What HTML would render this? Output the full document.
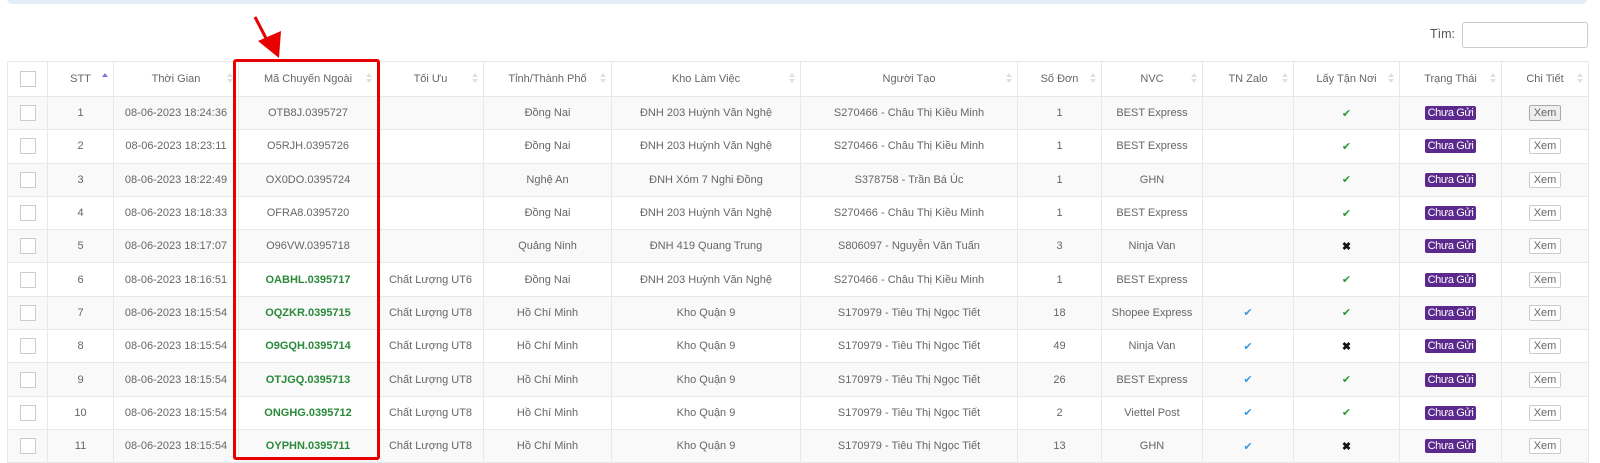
<!DOCTYPE html>
<html><head><meta charset="utf-8"><style>
body{margin:0;width:1600px;height:463px;background:#fff;font-family:"Liberation Sans",sans-serif;font-size:11px;color:#666;position:relative;overflow:hidden}
.bar{position:absolute;left:7px;top:-6px;width:1580px;height:10px;background:#e3ecf8;border-radius:5px}
.tim{position:absolute;left:1430px;top:27px;font-size:12.5px;color:#555}
.inp{position:absolute;left:1462px;top:22px;width:124px;height:24px;border:1px solid #ccc;border-radius:3px}
table{position:absolute;left:7px;top:61px;border-collapse:collapse;table-layout:fixed;width:1581px}
td,th{border:1px solid #e8e8e8;text-align:center;padding:0;height:32.3px;white-space:nowrap;overflow:hidden;position:relative}
th{font-weight:normal;height:34px;color:#666}
tbody tr:nth-child(odd){background:#f9f9f9}
.s{position:absolute;right:8px;top:11px;width:0;height:0}
.s:before{content:"";position:absolute;left:-3px;top:0;border:3px solid transparent;border-bottom:4px solid #e0e0e0;border-top:0}
.s:after{content:"";position:absolute;left:-3px;top:6px;border:3px solid transparent;border-top:4px solid #e0e0e0;border-bottom:0}
.up:before{border-bottom-color:#7a7ad8}.up:after{display:none}
.cb{display:inline-block;width:14px;height:14px;border:1px solid #ccc;background:#fff;vertical-align:middle}
.g{color:#2a8a3a;font-weight:bold}
.b{background:#5b2a8c;color:#fff;font-size:11px;padding:1px 3px;border-radius:2px;letter-spacing:-.4px}
.x{display:inline-block;border:1px solid #ccc;background:#fff;padding:1px 4px;font-size:11px;border-radius:2px}
.x0{background:#eee;border-color:#aaa}
.ck{color:#2a9a3a;font-size:11px}.bl{color:#3a9ae0;font-size:11px}.cr{color:#111;font-size:11px;font-weight:bold}
.red{position:absolute;left:233px;top:59px;width:141px;height:395px;border:3px solid #e60000;border-radius:3px}
</style></head><body>
<div class="bar"></div>
<div class="tim">Tìm:</div><div class="inp"></div>
<table>
<colgroup><col style="width:40px"><col style="width:66px"><col style="width:125px"><col style="width:139px"><col style="width:106px"><col style="width:128px"><col style="width:189px"><col style="width:217px"><col style="width:84px"><col style="width:101px"><col style="width:91px"><col style="width:106px"><col style="width:102px"><col style="width:87px"></colgroup>
<thead><tr><th><span class="cb"></span></th><th>STT<span class="s up"></span></th><th>Thời Gian<span class="s"></span></th><th>Mã Chuyến Ngoài<span class="s"></span></th><th>Tối Ưu<span class="s"></span></th><th>Tỉnh/Thành Phố<span class="s"></span></th><th>Kho Làm Việc<span class="s"></span></th><th>Người Tạo<span class="s"></span></th><th>Số Đơn<span class="s"></span></th><th>NVC<span class="s"></span></th><th>TN Zalo<span class="s"></span></th><th>Lấy Tận Nơi<span class="s"></span></th><th>Trạng Thái<span class="s"></span></th><th>Chi Tiết<span class="s"></span></th></tr></thead>
<tbody>
<tr><td><span class="cb"></span></td><td>1</td><td>08-06-2023 18:24:36</td><td>OTB8J.0395727</td><td></td><td>Đồng Nai</td><td>ĐNH 203 Huỳnh Văn Nghệ</td><td>S270466 - Châu Thị Kiều Minh</td><td>1</td><td>BEST Express</td><td></td><td><span class="ck">✔</span></td><td><span class="b">Chưa Gửi</span></td><td><span class="x x0">Xem</span></td></tr>
<tr><td><span class="cb"></span></td><td>2</td><td>08-06-2023 18:23:11</td><td>O5RJH.0395726</td><td></td><td>Đồng Nai</td><td>ĐNH 203 Huỳnh Văn Nghệ</td><td>S270466 - Châu Thị Kiều Minh</td><td>1</td><td>BEST Express</td><td></td><td><span class="ck">✔</span></td><td><span class="b">Chưa Gửi</span></td><td><span class="x">Xem</span></td></tr>
<tr><td><span class="cb"></span></td><td>3</td><td>08-06-2023 18:22:49</td><td>OX0DO.0395724</td><td></td><td>Nghệ An</td><td>ĐNH Xóm 7 Nghi Đồng</td><td>S378758 - Trần Bá Úc</td><td>1</td><td>GHN</td><td></td><td><span class="ck">✔</span></td><td><span class="b">Chưa Gửi</span></td><td><span class="x">Xem</span></td></tr>
<tr><td><span class="cb"></span></td><td>4</td><td>08-06-2023 18:18:33</td><td>OFRA8.0395720</td><td></td><td>Đồng Nai</td><td>ĐNH 203 Huỳnh Văn Nghệ</td><td>S270466 - Châu Thị Kiều Minh</td><td>1</td><td>BEST Express</td><td></td><td><span class="ck">✔</span></td><td><span class="b">Chưa Gửi</span></td><td><span class="x">Xem</span></td></tr>
<tr><td><span class="cb"></span></td><td>5</td><td>08-06-2023 18:17:07</td><td>O96VW.0395718</td><td></td><td>Quảng Ninh</td><td>ĐNH 419 Quang Trung</td><td>S806097 - Nguyễn Văn Tuấn</td><td>3</td><td>Ninja Van</td><td></td><td><span class="cr">✖</span></td><td><span class="b">Chưa Gửi</span></td><td><span class="x">Xem</span></td></tr>
<tr><td><span class="cb"></span></td><td>6</td><td>08-06-2023 18:16:51</td><td class="g">OABHL.0395717</td><td>Chất Lượng UT6</td><td>Đồng Nai</td><td>ĐNH 203 Huỳnh Văn Nghệ</td><td>S270466 - Châu Thị Kiều Minh</td><td>1</td><td>BEST Express</td><td></td><td><span class="ck">✔</span></td><td><span class="b">Chưa Gửi</span></td><td><span class="x">Xem</span></td></tr>
<tr><td><span class="cb"></span></td><td>7</td><td>08-06-2023 18:15:54</td><td class="g">OQZKR.0395715</td><td>Chất Lượng UT8</td><td>Hồ Chí Minh</td><td>Kho Quận 9</td><td>S170979 - Tiêu Thị Ngọc Tiết</td><td>18</td><td>Shopee Express</td><td><span class="bl">✔</span></td><td><span class="ck">✔</span></td><td><span class="b">Chưa Gửi</span></td><td><span class="x">Xem</span></td></tr>
<tr><td><span class="cb"></span></td><td>8</td><td>08-06-2023 18:15:54</td><td class="g">O9GQH.0395714</td><td>Chất Lượng UT8</td><td>Hồ Chí Minh</td><td>Kho Quận 9</td><td>S170979 - Tiêu Thị Ngọc Tiết</td><td>49</td><td>Ninja Van</td><td><span class="bl">✔</span></td><td><span class="cr">✖</span></td><td><span class="b">Chưa Gửi</span></td><td><span class="x">Xem</span></td></tr>
<tr><td><span class="cb"></span></td><td>9</td><td>08-06-2023 18:15:54</td><td class="g">OTJGQ.0395713</td><td>Chất Lượng UT8</td><td>Hồ Chí Minh</td><td>Kho Quận 9</td><td>S170979 - Tiêu Thị Ngọc Tiết</td><td>26</td><td>BEST Express</td><td><span class="bl">✔</span></td><td><span class="ck">✔</span></td><td><span class="b">Chưa Gửi</span></td><td><span class="x">Xem</span></td></tr>
<tr><td><span class="cb"></span></td><td>10</td><td>08-06-2023 18:15:54</td><td class="g">ONGHG.0395712</td><td>Chất Lượng UT8</td><td>Hồ Chí Minh</td><td>Kho Quận 9</td><td>S170979 - Tiêu Thị Ngọc Tiết</td><td>2</td><td>Viettel Post</td><td><span class="bl">✔</span></td><td><span class="ck">✔</span></td><td><span class="b">Chưa Gửi</span></td><td><span class="x">Xem</span></td></tr>
<tr><td><span class="cb"></span></td><td>11</td><td>08-06-2023 18:15:54</td><td class="g">OYPHN.0395711</td><td>Chất Lượng UT8</td><td>Hồ Chí Minh</td><td>Kho Quận 9</td><td>S170979 - Tiêu Thị Ngọc Tiết</td><td>13</td><td>GHN</td><td><span class="bl">✔</span></td><td><span class="cr">✖</span></td><td><span class="b">Chưa Gửi</span></td><td><span class="x">Xem</span></td></tr>
</tbody></table>
<div class="red"></div>
<svg style="position:absolute;left:0;top:0" width="400" height="70"><line x1="255" y1="17" x2="268" y2="42" stroke="#e60000" stroke-width="3"/><polygon points="258,41 281,31 279,58" fill="#e60000"/></svg>
</body></html>
